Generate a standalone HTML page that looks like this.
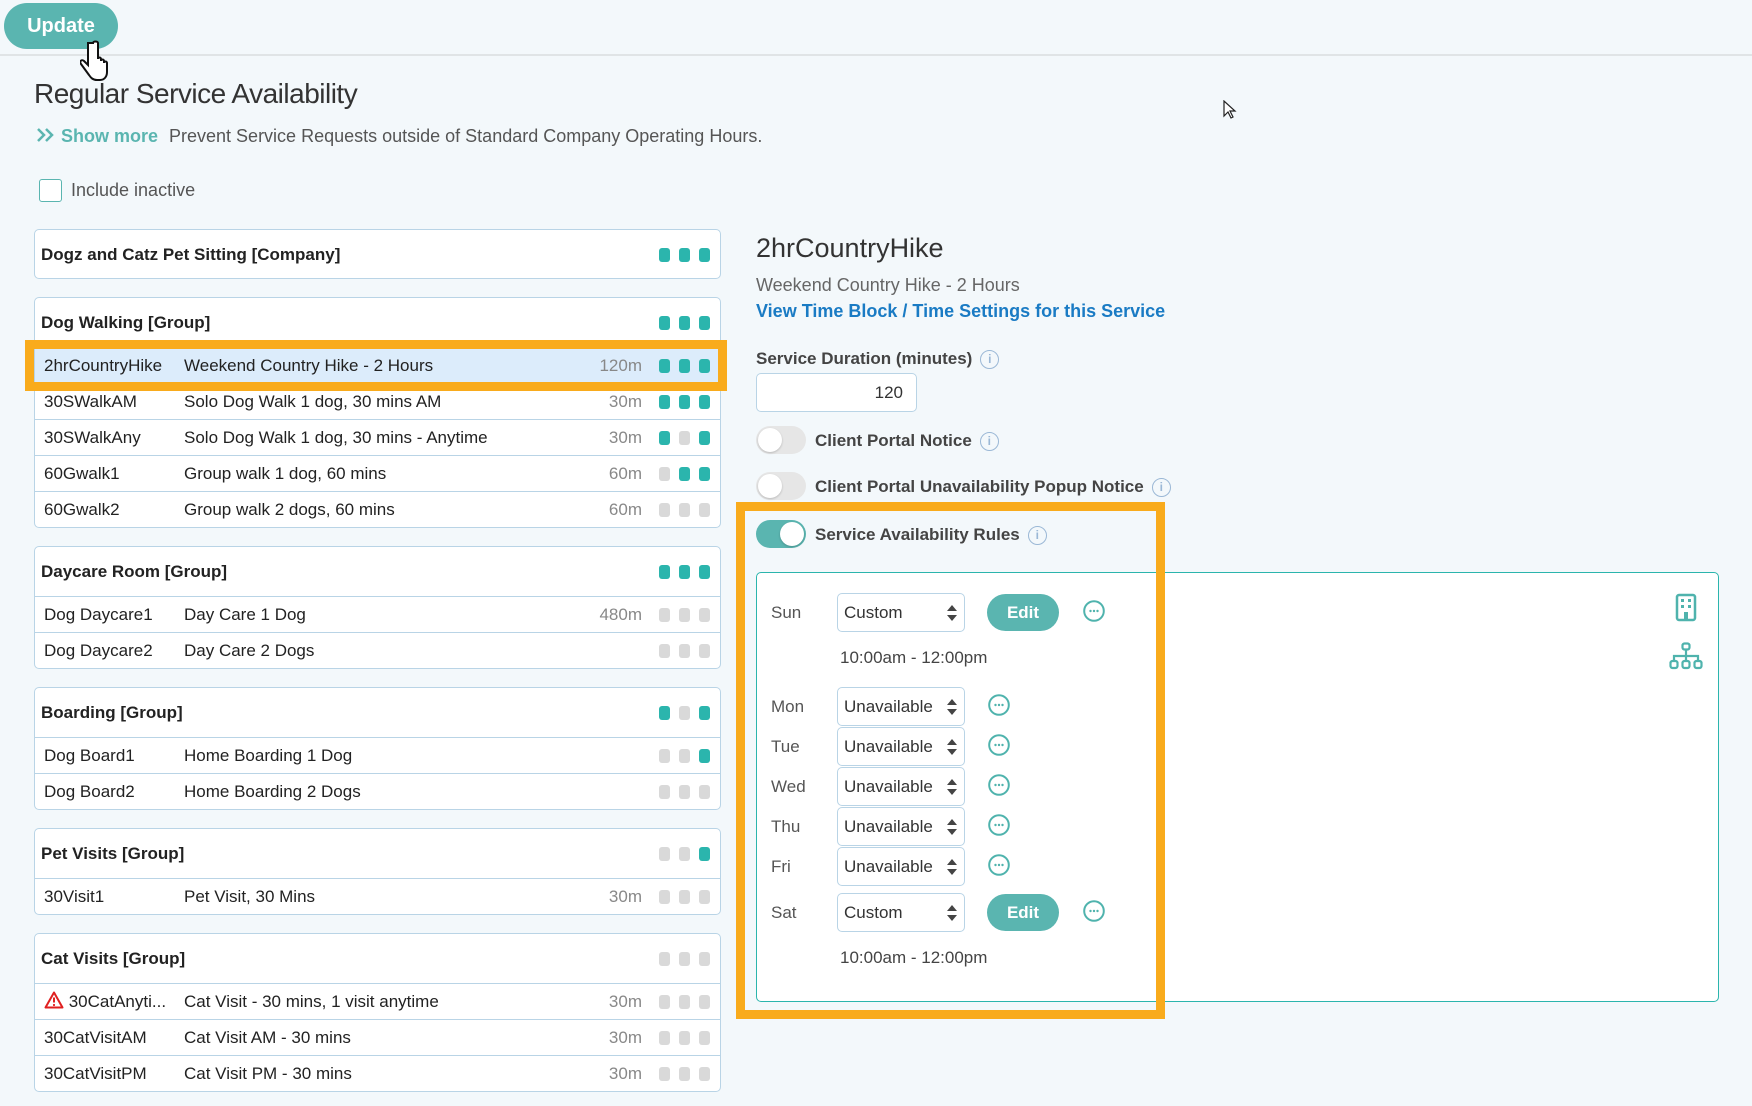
<!DOCTYPE html>
<html><head><meta charset="utf-8"><style>
*{box-sizing:border-box;margin:0;padding:0}
body{width:1752px;height:1106px;background:#f3f8fb;font-family:"Liberation Sans",sans-serif;color:#333;position:relative;overflow:hidden;font-size:17px}
.a{position:absolute;white-space:nowrap}
.panel{position:absolute;left:34px;width:687px;background:#fff;border:1px solid #b9d4e6;border-radius:5px}
.hd{height:49px;line-height:49px;padding-left:6px;font-weight:bold;font-size:17px;color:#222;position:relative}
.row{height:36px;line-height:36px;border-top:1px solid #b9d4e6;position:relative;font-size:17px;color:#222}
.c1{position:absolute;left:9px}
.c2{position:absolute;left:149px}
.dur{position:absolute;right:78px;color:#888}
.sq{position:absolute;right:10px;top:50%;margin-top:-7px;display:flex;gap:9px}
.sq i{display:block;width:11px;height:14px;border-radius:3px;background:#2bb5ad}
.sq i.g{background:#d9d9d9}
.sel{position:absolute;width:128px;height:39px;border:1px solid #b9d4e6;border-radius:5px;background:#fff;line-height:37px;padding-left:6px;font-size:17px;color:#333}
.sel:after{content:"";position:absolute;right:7px;top:11px;border:5px solid transparent;border-bottom:6px solid #444;border-top:0}
.sel:before{content:"";position:absolute;right:7px;top:21px;border:5px solid transparent;border-top:6px solid #444;border-bottom:0}
.edit{position:absolute;width:72px;height:37px;border-radius:19px;background:#5ab5b0;color:#fff;font-weight:bold;text-align:center;line-height:37px;font-size:17px}
.dots{position:absolute;width:22px;height:22px}
.day{position:absolute;left:771px;color:#555;font-size:17px}
.tog{position:absolute;left:756px;width:50px;height:28px;border-radius:14px;background:#e6e6e6}
.tog:after{content:"";position:absolute;left:2px;top:2px;width:24px;height:24px;border-radius:50%;background:#fff;box-shadow:0 1px 2px rgba(0,0,0,.2)}
.tog.on{background:#5ab5b0}.tog.on:after{left:24px}
.lbl{position:absolute;font-weight:bold;color:#444;font-size:17px}
.info{display:inline-block;width:19px;height:19px;border:1.5px solid #9bb8d6;border-radius:50%;color:#9bb8d6;font-size:12px;text-align:center;line-height:16px;margin-left:8px;font-weight:bold;vertical-align:1px}
</style></head><body>
<svg width="0" height="0" style="position:absolute"><defs><symbol id="dt" viewBox="0 0 22 22"><circle cx="11" cy="11" r="9.8" fill="none" stroke="#4fb3ad" stroke-width="2"/><circle cx="7.5" cy="11" r="1.2" fill="#4fb3ad"/><circle cx="11" cy="11" r="1.2" fill="#4fb3ad"/><circle cx="14.5" cy="11" r="1.2" fill="#4fb3ad"/></symbol></defs></svg>
<div class="a" style="left:0;top:54px;width:1752px;height:2px;background:#e0e4e6"></div>
<div class="a" style="left:4px;top:3px;width:114px;height:46px;border-radius:23px;background:#5ab5b0;color:#fff;font-weight:bold;font-size:20px;line-height:46px;text-align:center">Update</div>
<svg class="a" style="left:80px;top:40px" width="28" height="46" viewBox="0 0 28 46"><path d="M8 3v22l-4-4c-2-2-5 0-3 3l8 11c2 3 4 5 8 5h3c4 0 7-3 7-8V23c0-2-3-2-3 0v-2c0-2-3-2-3 0v-2c0-2-3-2-3 0V3c0-2-5-2-5 0z" fill="#fff" stroke="#111" stroke-width="2"/></svg>
<div class="a" style="left:34px;top:78px;font-size:28px;color:#333;letter-spacing:-0.5px">Regular Service Availability</div>
<svg class="a" style="left:36px;top:127px" width="20" height="16" viewBox="0 0 20 16"><path d="M2 2l6 6-6 6M10 2l6 6-6 6" fill="none" stroke="#5ab5b0" stroke-width="2.5"/></svg>
<div class="a" style="left:61px;top:126px;font-size:18px;color:#5ab5b0;font-weight:bold">Show more <span style="font-weight:normal;color:#555;margin-left:6px">Prevent Service Requests outside of Standard Company Operating Hours.</span></div>
<div class="a" style="left:39px;top:179px;width:23px;height:23px;border:1.5px solid #5ab5b0;border-radius:3px;background:#fff"></div>
<div class="a" style="left:71px;top:180px;font-size:18px;color:#555">Include inactive</div>

<div class="panel" style="top:229px;height:50px"><div class="hd">Dogz and Catz Pet Sitting [Company]<div class="sq"><i></i><i></i><i></i></div></div></div>

<div class="panel" style="top:297px;height:231px"><div class="hd">Dog Walking [Group]<div class="sq"><i></i><i></i><i></i></div></div>
<div class="row" style="background:#dcecfb"><span class="c1">2hrCountryHike</span><span class="c2">Weekend Country Hike - 2 Hours</span><span class="dur">120m</span><div class="sq"><i></i><i></i><i></i></div></div>
<div class="row"><span class="c1">30SWalkAM</span><span class="c2">Solo Dog Walk 1 dog, 30 mins AM</span><span class="dur">30m</span><div class="sq"><i></i><i></i><i></i></div></div>
<div class="row"><span class="c1">30SWalkAny</span><span class="c2">Solo Dog Walk 1 dog, 30 mins - Anytime</span><span class="dur">30m</span><div class="sq"><i></i><i class="g"></i><i></i></div></div>
<div class="row"><span class="c1">60Gwalk1</span><span class="c2">Group walk 1 dog, 60 mins</span><span class="dur">60m</span><div class="sq"><i class="g"></i><i></i><i></i></div></div>
<div class="row"><span class="c1">60Gwalk2</span><span class="c2">Group walk 2 dogs, 60 mins</span><span class="dur">60m</span><div class="sq"><i class="g"></i><i class="g"></i><i class="g"></i></div></div>
</div>
<div class="a" style="left:25px;top:340px;width:702px;height:51px;border:9px solid #f9ab1c"></div>

<div class="panel" style="top:546px;height:123px"><div class="hd">Daycare Room [Group]<div class="sq"><i></i><i></i><i></i></div></div>
<div class="row"><span class="c1">Dog Daycare1</span><span class="c2">Day Care 1 Dog</span><span class="dur">480m</span><div class="sq"><i class="g"></i><i class="g"></i><i class="g"></i></div></div>
<div class="row"><span class="c1">Dog Daycare2</span><span class="c2">Day Care 2 Dogs</span><div class="sq"><i class="g"></i><i class="g"></i><i class="g"></i></div></div>
</div>

<div class="panel" style="top:687px;height:123px"><div class="hd">Boarding [Group]<div class="sq"><i></i><i class="g"></i><i></i></div></div>
<div class="row"><span class="c1">Dog Board1</span><span class="c2">Home Boarding 1 Dog</span><div class="sq"><i class="g"></i><i class="g"></i><i></i></div></div>
<div class="row"><span class="c1">Dog Board2</span><span class="c2">Home Boarding 2 Dogs</span><div class="sq"><i class="g"></i><i class="g"></i><i class="g"></i></div></div>
</div>

<div class="panel" style="top:828px;height:87px"><div class="hd">Pet Visits [Group]<div class="sq"><i class="g"></i><i class="g"></i><i></i></div></div>
<div class="row"><span class="c1">30Visit1</span><span class="c2">Pet Visit, 30 Mins</span><span class="dur">30m</span><div class="sq"><i class="g"></i><i class="g"></i><i class="g"></i></div></div>
</div>

<div class="panel" style="top:933px;height:159px"><div class="hd">Cat Visits [Group]<div class="sq"><i class="g"></i><i class="g"></i><i class="g"></i></div></div>
<div class="row"><span class="c1"><svg width="20" height="18" viewBox="0 0 20 18" style="vertical-align:-2px"><path d="M10 1.5L1.5 16.5h17z" fill="none" stroke="#e02020" stroke-width="2" stroke-linejoin="round"/><path d="M10 6.5v5" stroke="#e02020" stroke-width="2"/><circle cx="10" cy="14" r="1.1" fill="#e02020"/></svg> 30CatAnyti...</span><span class="c2">Cat Visit - 30 mins, 1 visit anytime</span><span class="dur">30m</span><div class="sq"><i class="g"></i><i class="g"></i><i class="g"></i></div></div>
<div class="row"><span class="c1">30CatVisitAM</span><span class="c2">Cat Visit AM - 30 mins</span><span class="dur">30m</span><div class="sq"><i class="g"></i><i class="g"></i><i class="g"></i></div></div>
<div class="row"><span class="c1">30CatVisitPM</span><span class="c2">Cat Visit PM - 30 mins</span><span class="dur">30m</span><div class="sq"><i class="g"></i><i class="g"></i><i class="g"></i></div></div>
</div>

<div class="a" style="left:756px;top:233px;font-size:27px;color:#333">2hrCountryHike</div>
<div class="a" style="left:756px;top:275px;font-size:18px;color:#666">Weekend Country Hike - 2 Hours</div>
<div class="a" style="left:756px;top:301px;font-size:18px;color:#1a7bc4;font-weight:bold">View Time Block / Time Settings for this Service</div>
<div class="lbl" style="left:756px;top:349px">Service Duration (minutes)<span class="info">i</span></div>
<div class="a" style="left:756px;top:373px;width:161px;height:39px;background:#fff;border:1px solid #b9d4e6;border-radius:5px;text-align:right;padding-right:13px;line-height:37px;font-size:17px;color:#333">120</div>
<div class="tog" style="top:426px"></div>
<div class="lbl" style="left:815px;top:431px">Client Portal Notice<span class="info">i</span></div>
<div class="tog" style="top:472px"></div>
<div class="lbl" style="left:815px;top:477px">Client Portal Unavailability Popup Notice<span class="info">i</span></div>
<div class="tog on" style="top:520px"></div>
<div class="lbl" style="left:815px;top:525px">Service Availability Rules<span class="info">i</span></div>

<div class="a" style="left:756px;top:572px;width:963px;height:430px;background:#fff;border:1.5px solid #2bb5ad;border-radius:5px"></div>

<div class="day" style="top:603px">Sun</div><div class="sel" style="left:837px;top:593px">Custom</div><div class="edit" style="left:987px;top:594px">Edit</div><svg class="dots" style="left:1083px;top:600px"><use href="#dt"/></svg>
<div class="a" style="left:840px;top:648px;color:#444;font-size:17px">10:00am - 12:00pm</div>
<div class="day" style="top:697px">Mon</div><div class="sel" style="left:837px;top:687px">Unavailable</div><svg class="dots" style="left:988px;top:694px"><use href="#dt"/></svg>
<div class="day" style="top:737px">Tue</div><div class="sel" style="left:837px;top:727px">Unavailable</div><svg class="dots" style="left:988px;top:734px"><use href="#dt"/></svg>
<div class="day" style="top:777px">Wed</div><div class="sel" style="left:837px;top:767px">Unavailable</div><svg class="dots" style="left:988px;top:774px"><use href="#dt"/></svg>
<div class="day" style="top:817px">Thu</div><div class="sel" style="left:837px;top:807px">Unavailable</div><svg class="dots" style="left:988px;top:814px"><use href="#dt"/></svg>
<div class="day" style="top:857px">Fri</div><div class="sel" style="left:837px;top:847px">Unavailable</div><svg class="dots" style="left:988px;top:854px"><use href="#dt"/></svg>
<div class="day" style="top:903px">Sat</div><div class="sel" style="left:837px;top:893px">Custom</div><div class="edit" style="left:987px;top:894px">Edit</div><svg class="dots" style="left:1083px;top:900px"><use href="#dt"/></svg>
<div class="a" style="left:840px;top:948px;color:#444;font-size:17px">10:00am - 12:00pm</div>

<div class="a" style="left:736px;top:502px;width:429px;height:517px;border:9px solid #f9ab1c"></div>

<svg class="a" style="left:1675px;top:593px" width="22" height="29" viewBox="0 0 22 29"><rect x="2" y="2" width="18" height="25" rx="2" fill="none" stroke="#4fb3ad" stroke-width="2.5"/><g fill="#4fb3ad"><rect x="6" y="6" width="3" height="3"/><rect x="13" y="6" width="3" height="3"/><rect x="6" y="12" width="3" height="3"/><rect x="13" y="12" width="3" height="3"/><rect x="9" y="19" width="4" height="8"/></g></svg>
<svg class="a" style="left:1669px;top:642px" width="34" height="28" viewBox="0 0 34 28"><g fill="none" stroke="#4fb3ad" stroke-width="2.2"><rect x="13.5" y="1.5" width="7" height="6" rx="2"/><path d="M17 7.5v6M5 19v-5h24v5M17 13.5v5.5"/><rect x="1.5" y="19" width="7" height="7" rx="2"/><rect x="13.5" y="19" width="7" height="7" rx="2"/><rect x="25.5" y="19" width="7" height="7" rx="2"/></g></svg>
<svg class="a" style="left:1223px;top:100px" width="14" height="20" viewBox="0 0 14 20"><path d="M1 1v15l4-4 3 6 2-1-3-6h5z" fill="#fff" stroke="#222" stroke-width="1.2"/></svg>
</body></html>
